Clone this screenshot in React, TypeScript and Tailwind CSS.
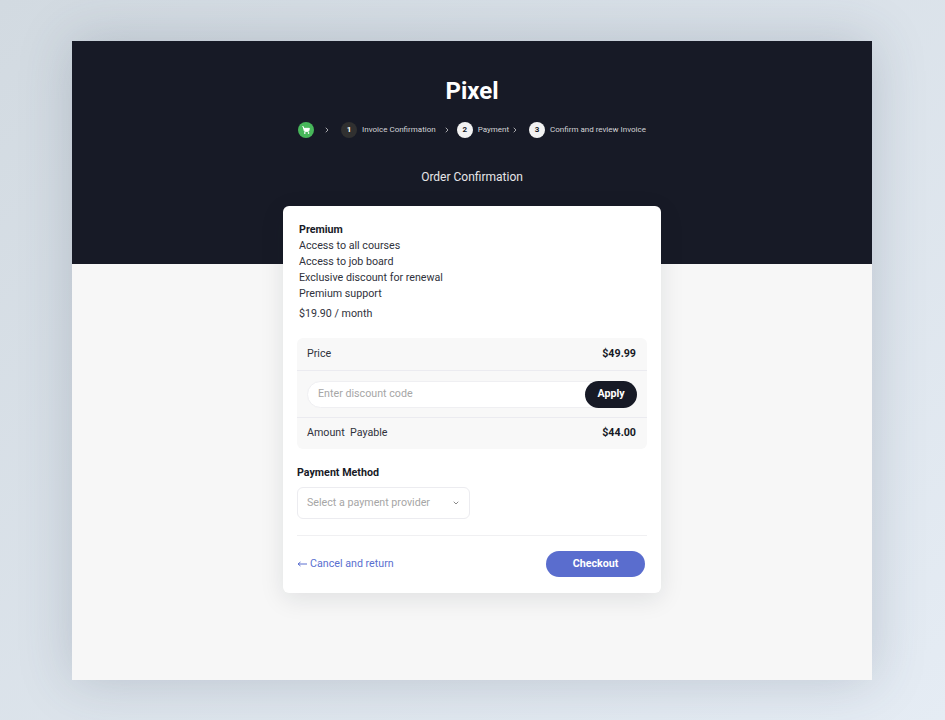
import { ChevronRight, ChevronDown, ShoppingCart } from 'lucide-react';

function Step({ n, label, done }: { n: string; label: string; done?: boolean }) {
  return (
    <div className="flex items-center">
      <span
        className={
          done
            ? 'flex h-4 w-4 items-center justify-center rounded-full bg-[#303030] text-[8px] font-bold text-white'
            : 'flex h-4 w-4 items-center justify-center rounded-full bg-[#f2f2f2] text-[8px] font-bold text-[#171a26]'
        }
      >
        {n}
      </span>
      <span className="ml-[5px] text-[8px] text-[#d4d4d6]">{label}</span>
    </div>
  );
}

export default function App() {
  return (
    <div className="h-[720px] overflow-hidden bg-gradient-to-br from-[#d2dae1] to-[#e5ecf4] pt-[41px] pl-[72px] font-['Roboto',sans-serif] antialiased">
      <div className="h-[639px] w-[800px] bg-[#f7f7f7] shadow-[0_0_50px_rgba(60,75,95,0.22)]">
        {/* Header */}
        <header className="flex h-[223px] flex-col items-center bg-[#171a26] pt-[35px]">
          <h1 className="text-[24px] leading-[30px] font-bold text-white">Pixel</h1>
          <div className="mt-[16px] flex h-4 items-center">
            <span className="flex h-4 w-4 items-center justify-center rounded-full bg-[#47b75a]">
              <ShoppingCart className="h-2 w-2 fill-white text-white" strokeWidth={3} />
            </span>
            <ChevronRight className="mr-[10px] ml-[9px] h-2 w-2 text-[#a8a8ac]" strokeWidth={3} />
            <Step n="1" label="Invoice Confirmation" done />
            <ChevronRight className="mr-[6px] ml-[7px] h-2 w-2 text-[#a8a8ac]" strokeWidth={3} />
            <Step n="2" label="Payment" />
            <ChevronRight className="mr-[10px] ml-[2px] h-2 w-2 text-[#a8a8ac]" strokeWidth={3} />
            <Step n="3" label="Confirm and review Invoice" />
          </div>
          <p className="mt-[31px] text-[12px] leading-[16px] text-[#e6e6e8]">Order Confirmation</p>
        </header>

        {/* Order card */}
        <div className="relative mx-auto -mt-[58px] h-[387px] w-[378px] rounded-[6px] bg-white px-[14px] pt-[16px] text-[10.7px] shadow-[0_6px_24px_rgba(20,25,40,0.10)]">
          <div className="pl-[2px] leading-[16px] text-[#30323c]">
            <p className="font-bold text-[#171a26]">Premium</p>
            <p>Access to all courses</p>
            <p>Access to job board</p>
            <p>Exclusive discount for renewal</p>
            <p>Premium support</p>
            <p className="mt-[4px]">$19.90 / month</p>
          </div>

          <div className="mt-[16px] rounded-[6px] bg-[#f8f8f8] text-[#30323c]">
            <div className="flex h-[33px] items-center justify-between border-b border-[#ebebf0] pr-[11px] pl-[10px]">
              <span>Price</span>
              <span className="font-bold text-[#171a26]">$49.99</span>
            </div>
            <div className="flex h-[47px] items-center border-b border-[#ebebf0] px-[10px]">
              <div className="flex h-[27px] flex-1 items-center justify-between rounded-full border border-[#efeff2] bg-white">
                <span className="pl-[10px] text-[#a6a6a6]">Enter discount code</span>
                <button className="-mr-px h-[27px] w-[52px] rounded-full bg-[#171a26] font-bold text-white">
                  Apply
                </button>
              </div>
            </div>
            <div className="flex h-[31px] items-center justify-between pr-[11px] pl-[10px]">
              <span className="whitespace-pre">Amount  Payable</span>
              <span className="font-bold text-[#171a26]">$44.00</span>
            </div>
          </div>

          <p className="mt-[17px] leading-[14px] font-bold text-[#171a26]">Payment Method</p>
          <div className="mt-[7px] flex h-[32px] w-[173px] items-center justify-between rounded-[6px] border border-[#ececf0] pr-[9px] pl-[9px] text-[#a6a6a6]">
            <span>Select a payment provider</span>
            <ChevronDown className="h-2 w-2 text-[#8a8a8a]" strokeWidth={3} />
          </div>

          <div className="mt-[16px] flex items-center justify-between border-t border-[#f0f0f2] pt-[15px] pr-[2px]">
            <a className="flex items-center text-[#5a6fd0]">
              <svg className="mr-[3px] h-[10px] w-[10px]" viewBox="0 0 10 10" fill="none" stroke="currentColor" strokeWidth="1">
                <path d="M1 5h9M3.5 3 1 5l2.5 2" />
              </svg>
              Cancel and return
            </a>
            <button className="h-[26px] w-[99px] rounded-full bg-[#5a6dce] font-bold text-white">
              Checkout
            </button>
          </div>
        </div>
      </div>
    </div>
  );
}
